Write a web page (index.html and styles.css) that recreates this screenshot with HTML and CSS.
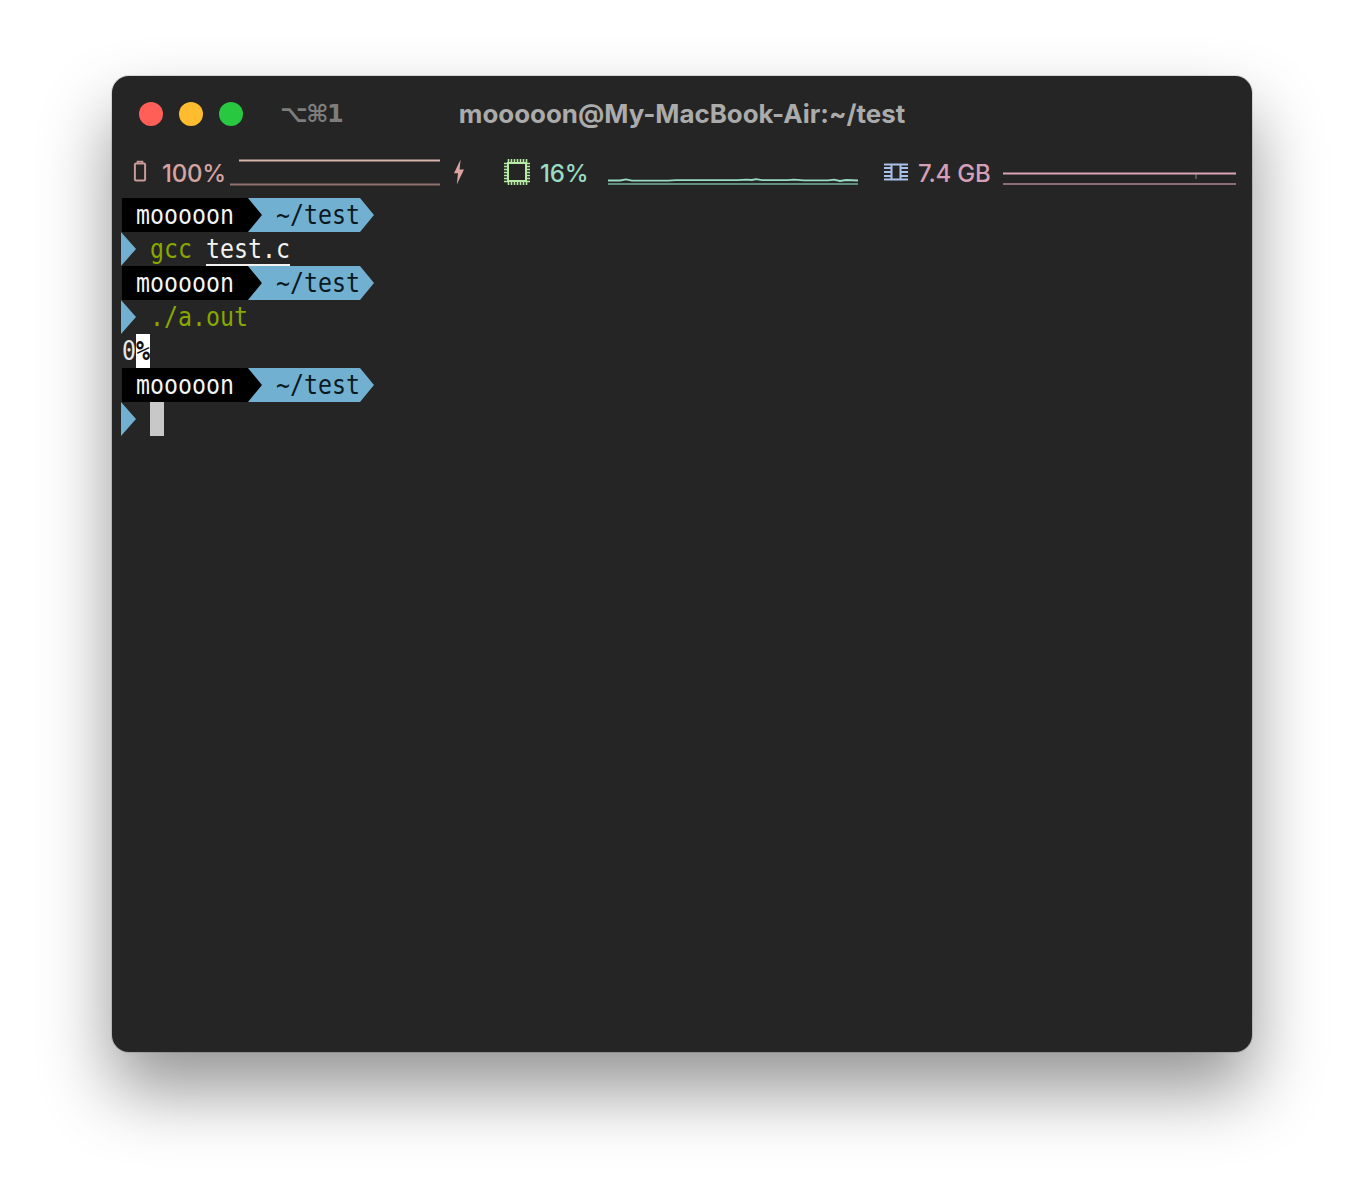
FILE: index.html
```html
<!DOCTYPE html>
<html lang="en">
<head>
<meta charset="utf-8">
<title>Terminal</title>
<link rel="stylesheet" href="styles.css">
</head>
<body>
<main class="window">
  <header class="titlebar">
    <div class="titlebar-left">
      <div class="lights">
        <span class="light red"></span>
        <span class="light yellow"></span>
        <span class="light green"></span>
      </div>
      <span class="tab-key">⌥⌘1</span>
    </div>
    <div class="title">mooooon@My-MacBook-Air:~/test</div>
    <div></div>
  </header>

  <section class="status">
    <svg class="icon-battery" viewBox="0 0 14 24" width="14" height="24" aria-hidden="true">
      <path d="M4.5 3V1.6h5V3" fill="none" stroke="#c99a97" stroke-width="1.6"/>
      <rect x="1.9" y="3.6" width="10.2" height="17" rx="1" fill="none" stroke="#c99a97" stroke-width="2"/>
    </svg>
    <span class="stat stat-battery">100%</span>
    <svg class="spark spark-battery" viewBox="0 0 210 28" width="210" height="28" aria-hidden="true">
      <path d="M9 2.5H210" stroke="#d9b3ae" stroke-width="1.8"/>
      <path d="M0 26.5H210" stroke="#8f7270" stroke-width="1.8"/>
    </svg>
    <svg class="icon-bolt" viewBox="0 0 12 26" width="12" height="26" aria-hidden="true">
      <path d="M7.6 0.5 1 14.2H5L3.8 25.5 11 10.4H6.6Z" fill="#dba3a0"/>
    </svg>
    <svg class="icon-cpu" viewBox="0 0 26 26" width="26" height="26" aria-hidden="true">
      <rect x="4" y="4" width="18" height="18" fill="none" stroke="#b8eaa4" stroke-width="2"/>
      <path d="M4.5 0v4M7.5 0v4M10.5 0v4M13.5 0v4M16.5 0v4M19.5 0v4M22.5 0v4M4.5 22v4M7.5 22v4M10.5 22v4M13.5 22v4M16.5 22v4M19.5 22v4M22.5 22v4M0 4.5h4M0 7.5h4M0 10.5h4M0 13.5h4M0 16.5h4M0 19.5h4M0 22.5h4M22 4.5h4M22 7.5h4M22 10.5h4M22 13.5h4M22 16.5h4M22 19.5h4M22 22.5h4" stroke="#b8eaa4" stroke-width="1.6"/>
    </svg>
    <span class="stat stat-cpu">16%</span>
    <svg class="spark spark-cpu" viewBox="0 0 250 28" width="250" height="28" aria-hidden="true">
      <path d="M0 22.5H12L18 21.4 24 22.6H60L68 22.2H130L138 21.6 144 22 148 21.2 154 22.2H180L186 21.6 196 22.4H220L226 21.6 232 23 238 22 250 22.5" fill="none" stroke="#98dcc4" stroke-width="1.8"/>
      <path d="M0 26H250" stroke="#5f8e7e" stroke-width="2"/>
    </svg>
    <svg class="icon-mem" viewBox="0 0 24 18" width="24" height="18" aria-hidden="true">
      <path d="M7.5 1.5V16.5M16.5 1.5V16.5" fill="none" stroke="#a9c0ea" stroke-width="2"/>
      <path d="M0 1.5H24M0 5H7M0 9H7M0 13H7M0 16.5H24M17 5H24M17 9H24M17 13H24" stroke="#a9c0ea" stroke-width="1.8"/>
    </svg>
    <span class="stat stat-mem">7.4 GB</span>
    <svg class="spark spark-mem" viewBox="0 0 233 28" width="233" height="28" aria-hidden="true">
      <path d="M0 15.5H233" stroke="#d9a3b8" stroke-width="1.8"/>
      <path d="M193 16v5" stroke="#a8a0a4" stroke-width="0.8"/>
      <path d="M0 26H233" stroke="#8a6e78" stroke-width="2"/>
    </svg>
  </section>

  <section class="term">
    <div class="row">
      <span class="seg-user"><span class="glyphs">mooooon</span></span><span class="seg-path"><span class="glyphs">~/test</span></span>
    </div>
    <div class="row">
      <span class="marker"></span><span class="glyphs cmd">gcc</span><span class="file"><span class="glyphs">test.c</span></span>
    </div>
    <div class="row">
      <span class="seg-user"><span class="glyphs">mooooon</span></span><span class="seg-path"><span class="glyphs">~/test</span></span>
    </div>
    <div class="row">
      <span class="marker"></span><span class="glyphs cmd">./a.out</span>
    </div>
    <div class="row">
      <span class="glyphs plain">0</span><span class="eol"><span class="glyphs">%</span></span>
    </div>
    <div class="row">
      <span class="seg-user"><span class="glyphs">mooooon</span></span><span class="seg-path"><span class="glyphs">~/test</span></span>
    </div>
    <div class="row">
      <span class="marker"></span><span class="cursor"></span>
    </div>
  </section>
</main>
</body>
</html>
```

FILE: styles.css
```css
html, body {
  margin: 0;
  padding: 0;
  background: #ffffff;
}
body {
  height: 1200px;
  overflow: hidden;
  padding: 76px 112px 0;
  box-sizing: border-box;
}
.window {
  height: 976px;
  background: #252525;
  border-radius: 17px;
  box-shadow: 0 38px 70px rgba(0, 0, 0, 0.42), 0 0 0 1px rgba(0, 0, 0, 0.12);
  overflow: hidden;
}

/* title bar */
.titlebar {
  display: grid;
  grid-template-columns: 1fr auto 1fr;
  align-items: center;
  height: 75px;
}
.titlebar-left {
  display: flex;
  align-items: center;
  padding-left: 27px;
}
.lights {
  display: flex;
  gap: 16px;
}
.light {
  width: 24px;
  height: 24px;
  border-radius: 50%;
}
.red { background: #ff5f57; }
.yellow { background: #febc2e; }
.green { background: #28c840; }
.tab-key {
  margin-left: 37px;
  color: #7d7d7d;
  font: 700 24px/1 "DejaVu Sans", sans-serif;
  letter-spacing: -1.5px;
}
.title {
  color: #ababab;
  font: 700 25.9px/1 "Inter", sans-serif;
  white-space: nowrap;
}

/* status line */
.status {
  display: flex;
  align-items: center;
  height: 41px;
  margin-bottom: 6px;
  padding-left: 21px;
}
.stat {
  padding-top: 4px;
  font: 500 24px/1 "Inter", sans-serif;
  letter-spacing: -0.2px;
  white-space: nowrap;
}
.stat-battery { color: #d3a4a1; margin-left: 15px; width: 68px; }
.stat-cpu { color: #98dcc4; margin-left: 10px; width: 68px; }
.stat-mem { color: #d59fb7; margin-left: 10px; width: 85px; }
.icon-bolt { margin-left: 13px; }
.icon-cpu { margin-left: 39px; }
.icon-mem { margin-left: 26px; }

/* terminal grid */
.term {
  padding: 0 0 0 10px;
  font: 400 23.26px/34px "DejaVu Sans Mono", monospace;
  color: #f2f2f2;
}
.row {
  display: flex;
  height: 34px;
  white-space: pre;
}
/* the reference glyphs are slightly taller than DejaVu at the same advance */
.glyphs {
  display: inline-block;
  transform: scaleY(1.14);
  transform-origin: 50% 50%;
}
.seg-user {
  box-sizing: border-box;
  width: 140px;
  padding-left: 14px;
  background: #000000;
  color: #f5f5f5;
  clip-path: polygon(0 0, 126px 0, 100% 50%, 126px 100%, 0 100%);
}
.seg-path {
  box-sizing: border-box;
  width: 126px;
  margin-left: -14px;
  padding-left: 28px;
  background: #71b0d0;
  color: #0a1720;
  clip-path: polygon(0 0, 112px 0, 100% 50%, 112px 100%, 0 100%, 14px 50%);
}
.marker {
  width: 15px;
  margin: 0 14px 0 -1px;
  background: #71b0d0;
  clip-path: polygon(0 0, 100% 50%, 0 100%);
}
.cmd { color: #87a800; }
.file {
  margin-left: 14px;
  box-shadow: inset 0 -2px 0 #f2f2f2;
}
.plain { color: #e8e8e8; }
.eol {
  background: #ffffff;
  color: #111111;
  font-weight: 700;
}
.cursor {
  width: 14px;
  background: #c8c8c8;
}
```
